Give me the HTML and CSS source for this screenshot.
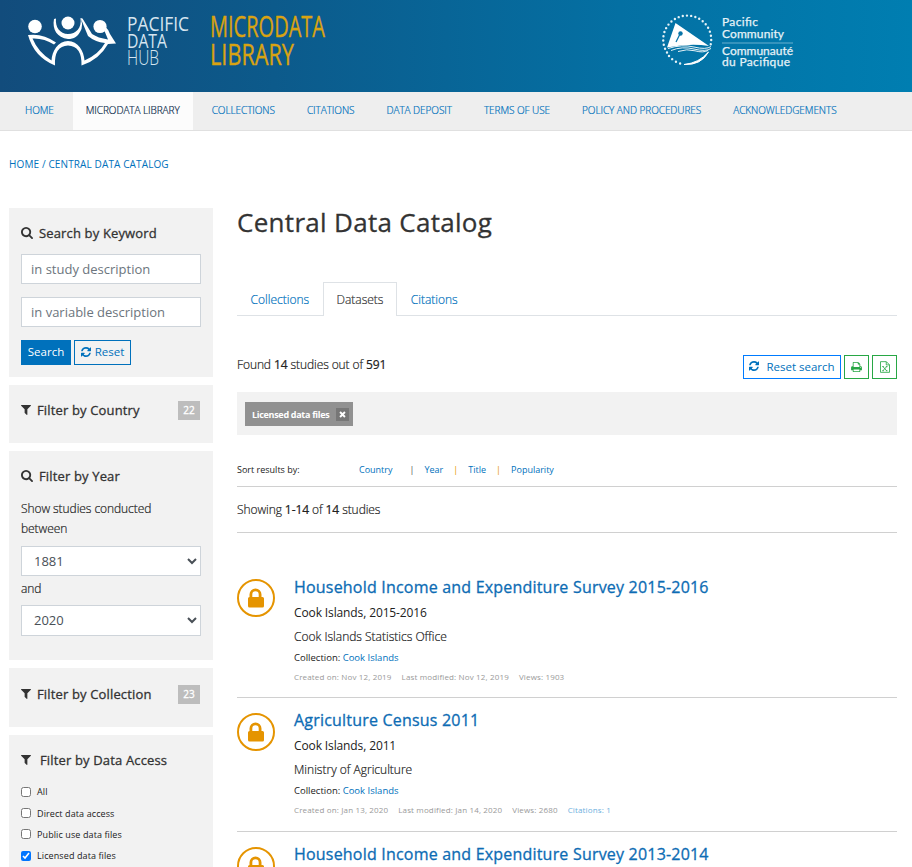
FILE: index.html
```html
<!DOCTYPE html>
<html lang="en">
<head>
<meta charset="utf-8">
<title>Central Data Catalog</title>
<link rel="stylesheet" href="styles.css">
</head>
<body>
<svg class="sprite" aria-hidden="true">
  <symbol id="search" viewBox="0 0 1664 1664"><path d="M1152 704q0-185-131.500-316.500t-316.500-131.500-316.500 131.500-131.500 316.500 131.500 316.500 316.500 131.500 316.500-131.500 131.500-316.500zm512 832q0 52-38 90t-90 38q-54 0-90-38l-343-342q-179 124-399 124-143 0-273.500-55.500t-225-150-150-225-55.500-273.500 55.500-273.500 150-225 225-150 273.500-55.500 273.500 55.500 225 150 150 225 55.500 273.500q0 220-124 399l343 343q37 37 37 90z"/></symbol>
  <symbol id="filter" viewBox="0 0 1408 1408"><path d="M1403 39q17 41-14 70l-493 493v742q0 42-39 59-13 5-25 5-27 0-45-19l-256-256q-19-19-19-45v-486l-493-493q-31-29-14-70 17-39 59-39h1280q42 0 59 39z"/></symbol>
  <symbol id="refresh" viewBox="0 0 1536 1536"><path d="M1511 928q0 5-1 7-64 268-268 434.500t-478 166.500q-146 0-282.500-55t-243.500-157l-129 129q-19 19-45 19t-45-19-19-45v-448q0-26 19-45t45-19h448q26 0 45 19t19 45-19 45l-137 137q71 66 161 102t187 36q134 0 250-65t186-179q11-17 53-117 8-23 30-23h192q13 0 22.500 9.500t9.500 22.500zm25-800v448q0 26-19 45t-45 19h-448q-26 0-45-19t-19-45 19-45l138-138q-148-137-349-137-134 0-250 65t-186 179q-11 17-53 117-8 23-30 23h-199q-13 0-22.500-9.500t-9.500-22.500v-7q65-268 270-434.500t480-166.500q146 0 284 55.500t245 156.500l130-129q19-19 45-19t45 19 19 45z"/></symbol>
  <symbol id="print" viewBox="0 0 1664 1536"><path d="M384 1408h896v-256h-896v256zm0-640h896v-384h-160q-40 0-68-28t-28-68v-160h-640v640zm1152 64q0-26-19-45t-45-19-45 19-19 45 19 45 45 19 45-19 19-45zm128 0v416q0 13-9.500 22.500t-22.500 9.500h-224v160q0 40-28 68t-68 28h-960q-40 0-68-28t-28-68v-160h-224q-13 0-22.500-9.500t-9.500-22.500v-416q0-79 56.500-135.500t135.500-56.500h64v-544q0-40 28-68t68-28h672q40 0 88 20t76 48l152 152q28 28 48 76t20 88v256h64q79 0 135.500 56.500t56.500 135.500z"/></symbol>
  <symbol id="excel" viewBox="0 0 12 14"><path d="M.6.6h7l3.800 3.800v9H.6zM7.500.8v3.700h3.700M3.500 6.500l4.500 5M8 6.500l-4.500 5M2.700 6.500h2M7 6.500h2M2.700 11.500h2M7 11.500h2" fill="none" stroke="currentColor"/></symbol>
  <symbol id="lock" viewBox="0 0 38 38"><circle cx="19" cy="19" r="18" fill="#fff" stroke="currentColor" stroke-width="2"/><path d="M12.500 18v-2.500a6 6 0 0 1 12 0v2.500h1q1.500 0 1.500 1.500v7.500q0 1.500-1.500 1.500h-13q-1.500 0-1.500-1.500v-7.500q0-1.500 1.500-1.500zm2.800 0h6.400v-2.500a3.200 3.200 0 0 0-6.400 0z"/></symbol>
</svg>

<header class="banner">
  <svg class="hub-logo" width="360" height="92" viewBox="0 0 360 92">
    <g fill="#fff">
      <circle cx="35" cy="26.500" r="6.800"/><circle cx="68" cy="23" r="6.500"/><circle cx="100" cy="26.500" r="6.600"/>
      <path d="M28 35Q43 33 56 42.500L54 44.500Q44 38 32.500 38.500Q38 52 51.500 60.500C52 51 58 41 68 41S84 51 84.500 60.500Q99 54 105 43Q95 42 88 36L81 19Q83 24 81.500 29C78 37 74 39 68 39C57 38 52 29 54 19L56 18.500C55 27 60 34 68 34C76 34 82 28 80.500 18L82.500 18.500L92 34Q98 38 108 39.500L104.500 31L106 27.500Q109 30 110 34L116 43.500L108 44Q99 60 81.500 65.500Q82 46 68 45.500Q54 46 55 65.500Q34 57 28 35z"/>
    </g>
    <g font-family="Open Sans" fill="#d6e5f0" font-size="20" font-weight="300">
      <text x="127" y="31" font-weight="400" textLength="62" lengthAdjust="spacingAndGlyphs">PACIFIC</text>
      <text x="127" y="48" textLength="40" font-weight="400" lengthAdjust="spacingAndGlyphs">DATA</text>
      <text x="127" y="65" textLength="32" lengthAdjust="spacingAndGlyphs">HUB</text>
    </g>
    <g font-family="Open Sans" font-weight="400" fill="#d9a312" stroke="#d9a312" stroke-width=".4" font-size="29">
      <text x="210" y="37" textLength="115" lengthAdjust="spacingAndGlyphs">MICRODATA</text>
      <text x="210" y="65" textLength="84" lengthAdjust="spacingAndGlyphs">LIBRARY</text>
    </g>
  </svg>
  <svg class="spc-logo" width="140" height="92" viewBox="660 0 140 92">
    <path d="M667 52.500A24 24 0 1 1 710.600 45" fill="none" stroke="#e6f2f7" stroke-width="2.400" stroke-dasharray="0 4.250" stroke-linecap="round"/>
    <path d="M669 56A24 24 0 0 0 682 64" fill="none" stroke="#e6f2f7" stroke-width="2.400" stroke-dasharray="0 4.500" stroke-linecap="round"/>
    <path d="M708.500 52Q701 65.500 684 64.500Q699 63 708.500 52z" fill="#fff" stroke="#fff"/>
    <path d="M675.500 23L709 46Q690 43 667 47.500z" fill="#fff"/>
    <path d="M668 48.500Q682 44 694 47T711 46.500M671 50.500Q682 46 694 49T711 48.500M678 51.500Q687 48.500 695 50.800T708 50.500" fill="none" stroke="#e6f2f7"/>
    <path d="M676 42L680 34" stroke="#0874a8" stroke-width="1.200"/><circle cx="680.500" cy="33.500" r="2.200" fill="#0874a8"/>
    <g font-family="Lato" font-weight="400" font-size="12" fill="#e6f2f7" stroke="#e6f2f7" stroke-width=".25">
      <text x="722" y="26" textLength="36">Pacific</text>
      <text x="722" y="37.500" textLength="62">Community</text>
      <text x="722" y="54.500" textLength="71">Communauté</text>
      <text x="722" y="66" textLength="68">du Pacifique</text>
    </g>
    <path d="M722 43h71" stroke="#69b0cf"/>
  </svg>
</header>

<nav class="menu">
  <a>HOME</a><a class="active">MICRODATA LIBRARY</a><a>COLLECTIONS</a><a>CITATIONS</a><a>DATA DEPOSIT</a><a>TERMS OF USE</a><a>POLICY AND PROCEDURES</a><a>ACKNOWLEDGEMENTS</a>
</nav>

<div class="crumbs"><a>HOME</a> / <a>CENTRAL DATA CATALOG</a></div>

<div class="page">
  <aside class="sidebar">
    <section class="panel keyword">
      <h2><svg class="i-search"><use href="#search"/></svg>Search by Keyword</h2>
      <input class="field" placeholder="in study description">
      <input class="field" placeholder="in variable description">
      <div class="buttons"><button class="btn primary">Search</button><button class="btn"><svg class="i-refresh"><use href="#refresh"/></svg>Reset</button></div>
    </section>
    <section class="panel country">
      <h2><svg class="i-filter"><use href="#filter"/></svg>Filter by Country<span class="count">22</span></h2>
    </section>
    <section class="panel year">
      <h2><svg class="i-search"><use href="#search"/></svg>Filter by Year</h2>
      <p>Show studies conducted between</p>
      <select class="field"><option>1881</option></select>
      <p class="and">and</p>
      <select class="field last"><option>2020</option></select>
    </section>
    <section class="panel collection">
      <h2><svg class="i-filter"><use href="#filter"/></svg>Filter by Collection<span class="count">23</span></h2>
    </section>
    <section class="panel access">
      <h2><svg class="i-filter"><use href="#filter"/></svg>Filter by Data Access</h2>
      <label><input type="checkbox">All</label>
      <label><input type="checkbox">Direct data access</label>
      <label><input type="checkbox">Public use data files</label>
      <label><input type="checkbox" checked>Licensed data files</label>
    </section>
  </aside>

  <main>
    <h1>Central Data Catalog</h1>
    <div class="tabs"><a>Collections</a><a class="active">Datasets</a><a>Citations</a></div>
    <div class="found">
      <span>Found <b>14</b> studies out of <b>591</b></span>
      <div class="tools">
        <button class="btn reset"><svg class="i-refresh"><use href="#refresh"/></svg>Reset search</button>
        <button class="btn green"><svg class="i-print"><use href="#print"/></svg></button>
        <button class="btn green"><svg class="i-excel"><use href="#excel"/></svg></button>
      </div>
    </div>
    <div class="chips"><span class="chip">Licensed data files<span class="close"><svg viewBox="0 0 8 8"><path d="M1.200 1.200L6.800 6.800M6.800 1.200L1.200 6.800" stroke="#fff" stroke-width="2.200"/></svg></span></span></div>
    <div class="sort"><span class="by">Sort results by:</span><a class="s1">Country</a><i>|</i><a>Year</a><i>|</i><a>Title</a><i>|</i><a>Popularity</a></div>
    <div class="showing">Showing <b>1-14</b> of <b>14</b> studies</div>
    <div class="list">
      <article>
        <svg class="i-lock"><use href="#lock"/></svg>
        <div class="study">
          <h3>Household Income and Expenditure Survey 2015-2016</h3>
          <div class="nation">Cook Islands, 2015-2016</div>
          <div class="owner">Cook Islands Statistics Office</div>
          <div class="coll">Collection: <a>Cook Islands</a></div>
          <div class="meta"><span>Created on: Nov 12, 2019</span><span>Last modified: Nov 12, 2019</span><span>Views: 1903</span></div>
        </div>
      </article>
      <article>
        <svg class="i-lock"><use href="#lock"/></svg>
        <div class="study">
          <h3>Agriculture Census 2011</h3>
          <div class="nation">Cook Islands, 2011</div>
          <div class="owner">Ministry of Agriculture</div>
          <div class="coll">Collection: <a>Cook Islands</a></div>
          <div class="meta"><span>Created on: Jan 13, 2020</span><span>Last modified: Jan 14, 2020</span><span>Views: 2680</span><a>Citations: 1</a></div>
        </div>
      </article>
      <article class="partial">
        <svg class="i-lock"><use href="#lock"/></svg>
        <div class="study"><h3>Household Income and Expenditure Survey 2013-2014</h3></div>
      </article>
    </div>
  </main>
</div>
</body>
</html>
```
FILE: styles.css
```css
* { box-sizing: border-box; }
html { overflow: hidden; }
body { margin: 0; height: 867px; overflow: hidden; background: #fff; color: #212121; font-family: "Open Sans", sans-serif; font-size: 12px; font-weight: 300; }
h1, h2, h3, p { margin: 0; font-weight: 400; }
h1, h2, h3 { -webkit-text-stroke: .3px currentColor; color: #333; }
a { color: #0071bc; }
b { font-weight: 400; }
svg { fill: currentColor; flex: none; }
button, input, select { font-family: inherit; }
.sprite { display: none; }

.menu, .tabs, .found > span, .showing, .owner, .panel p { -webkit-text-stroke: .2px currentColor; }

.banner { height: 92px; display: flex; justify-content: space-between; padding-right: 112px; background: linear-gradient(90deg, #124c7c, #0c5a8b 30%, #0470a3 68%, #007eb1); }
.menu { height: 39px; display: flex; gap: 6px; padding-left: 12px; background: #eee; border-bottom: 1px solid #e0e0e0; font-size: 10px; line-height: 37px; letter-spacing: -.06px; }
.menu a { padding: 0 13px; white-space: nowrap; }
.menu .active { background: #fcfcfc; color: #0a2a4a; }
.crumbs { height: 77px; padding: 26px 9px 0; font-size: 10px; line-height: 15px; font-weight: 400; letter-spacing: .12px; color: #0071bc; }

.page { display: grid; grid-template-columns: 204px 660px; column-gap: 24px; padding-left: 9px; }
.sidebar { display: flex; flex-direction: column; gap: 8px; }
.panel { background: #f2f2f2; padding: 15px 12px 0; }
.panel h2 { height: 20px; display: flex; align-items: center; font-size: 13px; line-height: 20px; letter-spacing: .15px; white-space: nowrap; }
.keyword { height: 169px; }
.country { height: 58px; }
.year { height: 209px; }
.collection { height: 59px; padding-top: 16px; }
.access { height: 132px; }
.i-search { width: 12px; height: 12px; margin-right: 6px; }
.i-filter { width: 10px; height: 10px; margin-right: 6px; }
.access .i-filter { margin-right: 9px; }
.count { margin: 0 1px 0 auto; width: 22px; height: 19px; background: #bdbdbd; color: #fff; font-size: 10px; line-height: 19px; text-align: center; }
.field { display: block; width: 180px; height: 30px; padding: 0 9px; border: 1px solid #ced4da; border-radius: 0; background: #fff; color: #495057; font-size: 13px; }
.field::placeholder { color: #6c757d; opacity: 1; }
.keyword .field { margin-top: 13px; }
.keyword h2 + .field { margin-top: 11px; }
select.field { padding: 0 0 0 8px; }
select.last { height: 31px; padding-bottom: 1px; }
.buttons { display: flex; gap: 3px; margin-top: 13px; }
.btn { display: flex; align-items: center; justify-content: center; height: 25px; padding: 0 6px 2px; border: 1px solid #0071bc; border-radius: 0; background: #fff; color: #0071bc; font-size: 11.500px; white-space: nowrap; }
.btn.primary { width: 50px; background: #0071bc; color: #fff; }
.buttons .btn + .btn { width: 57px; background: transparent; }
.i-refresh { width: 10px; height: 10px; margin-right: 4px; }
.panel p { margin: 13px 0 7px; padding-right: 20px; font-size: 12px; line-height: 20px; font-weight: 300; letter-spacing: -.07px; }
.year p.and { margin: 3px 0 6px; }
.access h2 { margin-bottom: 11px; }
.access label { display: flex; align-items: center; height: 21.400px; font-size: 9px; font-weight: 400; letter-spacing: .1px; }
.access input { width: 10px; height: 10px; margin: 0 6px 0 0; }

h1 { height: 74px; font-size: 26px; line-height: 29px; letter-spacing: .3px; }
.tabs { display: flex; height: 34px; border-bottom: 1px solid #dee2e6; font-size: 12px; line-height: 36px; }
.tabs a { height: 34px; padding: 0 13.500px; }
.tabs .active { padding: 0 12.800px; border: 1px solid #dee2e6; border-bottom: 0; background: #fff; color: #333; line-height: 34px; }
.found { display: flex; justify-content: space-between; margin-top: 39px; height: 25px; line-height: 20px; letter-spacing: -.09px; }
.tools { display: flex; gap: 3px; }
.tools .btn { height: 24px; }
.reset { width: 98px; border-color: #007bff; }
.reset .i-refresh { margin-right: 7px; }
.btn.green { width: 25px; padding: 0; color: #28a745; border-color: #28a745; }
.i-print { width: 11px; height: 10px; }
.i-excel { width: 10px; height: 12px; }
.chips { margin-top: 12px; height: 43px; padding: 10px 8px; background: #f2f2f2; }
.chip { display: flex; align-items: center; width: 108px; height: 24px; padding-left: 7px; background: #919191; color: #fff; font-size: 9px; font-weight: 700; letter-spacing: -.3px; white-space: nowrap; }
.close { display: flex; align-items: center; justify-content: center; margin: 0 4px 0 auto; width: 13px; height: 13px; background: #777; }
.close svg { width: 7px; height: 7px; }
.sort { display: flex; height: 52px; padding-top: 28px; border-bottom: 1px solid #d0d0d0; font-size: 9px; font-weight: 400; line-height: 14px; }
.sort .by { width: 122px; }
.sort i { width: 25px; padding-left: 10px; font-style: normal; color: #e59400; }
.sort .s1 + i { width: 32px; padding-left: 17px; color: #555; }
.showing { height: 46px; line-height: 46px; letter-spacing: -.08px; border-bottom: 1px solid #d0d0d0; }
.list { padding-top: 31px; }
article { display: flex; gap: 19px; height: 134px; padding-top: 14px; border-bottom: 1px solid #d0d0d0; white-space: nowrap; }
article.partial { height: 35px; overflow: hidden; border: 0; }
.study { margin-top: -1px; }
article + article .study { margin-top: -2px; }
.i-lock { width: 38px; height: 38px; margin-top: 1px; color: #e59400; }
h3 { font-size: 16px; line-height: 20px; letter-spacing: .2px; color: #0d6cb4; }
.nation { margin-top: 7px; height: 18px; line-height: 18px; font-weight: 400; letter-spacing: -.12px; }
.owner { margin-top: 6px; line-height: 18px; }
.coll { margin-top: 4px; font-size: 9.500px; line-height: 15px; font-weight: 400; }
.meta { display: flex; gap: 10px; margin-top: 5px; font-size: 8px; line-height: 13px; font-weight: 400; letter-spacing: .15px; color: #999; }
.meta a { color: #6cb0de; }
```
